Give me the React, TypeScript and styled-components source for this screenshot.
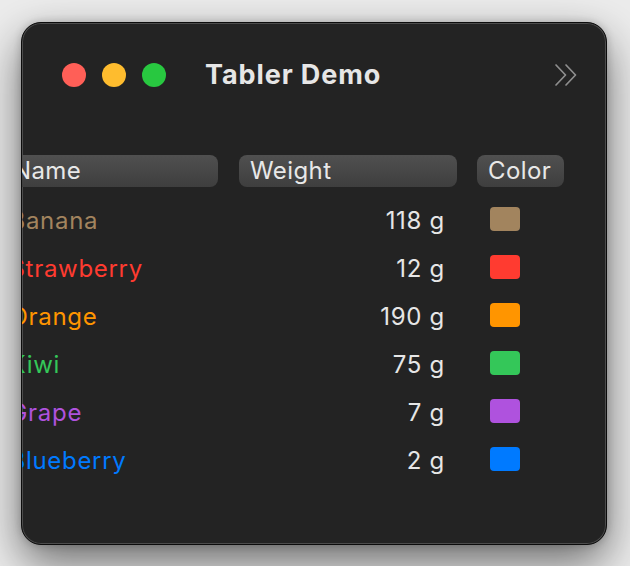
import React from "react";
import styled, { createGlobalStyle } from "styled-components";

const Global = createGlobalStyle`
  html, body { margin: 0; padding: 0; }
  body {
    background: #ececec;
    font-family: Inter, "Noto Sans", "Liberation Sans", sans-serif;
    -webkit-font-smoothing: antialiased;
  }
`;

const Page = styled.div`
  width: 630px;
  height: 566px;
  padding: 22px 0 0 21px;
  box-sizing: border-box;
  overflow: hidden;
`;

const Window = styled.div`
  width: 586px;
  height: 523px;
  box-sizing: border-box;
  background: #232323;
  border: 1px solid #0c0c0c;
  border-radius: 20px;
  box-shadow: inset 0 0 0 1px #4c4c4c, 0 18px 45px rgba(0, 0, 0, 0.55),
    0 0 8px rgba(0, 0, 0, 0.2);
  overflow: hidden;
  display: flex;
  flex-direction: column;
`;

const TitleBar = styled.div`
  height: 104px;
  flex: none;
  display: flex;
  align-items: center;
  padding: 0 27px 0 40px;
`;

const Lights = styled.div`
  display: flex;
  gap: 16px;
  margin-right: 39px;
`;

const Light = styled.span<{ $c: string }>`
  width: 24px;
  height: 24px;
  border-radius: 50%;
  background: ${(p) => p.$c};
`;

const Title = styled.div`
  flex: 1;
  color: #e6e6e6;
  font-size: 27px;
  font-weight: 700;
  letter-spacing: 0.9px;
  padding-bottom: 1px;
`;

const Chevrons = styled.svg`
  width: 26px;
  height: 24px;
  display: block;
`;

const Table = styled.div`
  margin: 28px 0 0 -20px;
  display: grid;
  grid-template-columns: 216px 218px 86px;
  column-gap: 21px;
  grid-auto-rows: 48px;
  grid-template-rows: 40px;
`;

const HeaderCell = styled.div`
  height: 32px;
  box-sizing: border-box;
  padding: 0 11px;
  border-radius: 8px;
  background: linear-gradient(#505050, #3e3e3e);
  color: #e8e8e8;
  font-size: 24px;
  letter-spacing: 0.4px;
  line-height: 32px;
  white-space: nowrap;
  align-self: start;
`;

const ColorHeaderCell = styled(HeaderCell)`
  margin-left: -1px;
`;

const NameCell = styled.div<{ $c: string }>`
  color: ${(p) => p.$c};
  font-size: 24px;
  letter-spacing: 0.7px;
  display: flex;
  align-items: center;
  padding-left: 7.5px;
  padding-top: 2px;
  white-space: nowrap;
`;

const WeightCell = styled.div`
  color: #e6e6e6;
  font-size: 24px;
  letter-spacing: 0.7px;
  display: flex;
  align-items: center;
  justify-content: flex-end;
  padding-right: 12px;
  padding-top: 2px;
  white-space: nowrap;
`;

const ColorCell = styled.div`
  display: flex;
  align-items: center;
  padding-left: 12px;
`;

const Swatch = styled.span<{ $c: string }>`
  width: 30px;
  height: 24px;
  border-radius: 4px;
  background: ${(p) => p.$c};
`;

const fruits = [
  { name: "Banana", weight: "118 g", color: "#a2845e" },
  { name: "Strawberry", weight: "12 g", color: "#ff3b30" },
  { name: "Orange", weight: "190 g", color: "#ff9500" },
  { name: "Kiwi", weight: "75 g", color: "#34c759" },
  { name: "Grape", weight: "7 g", color: "#af52de" },
  { name: "Blueberry", weight: "2 g", color: "#007aff" },
];

export default function App() {
  return (
    <>
      <Global />
      <Page>
        <Window>
          <TitleBar>
            <Lights>
              <Light $c="#ff5f57" />
              <Light $c="#febc2e" />
              <Light $c="#28c840" />
            </Lights>
            <Title>Tabler Demo</Title>
            <Chevrons viewBox="0 0 26 24" fill="none" stroke="#8e8e8e" strokeWidth="1.7" strokeLinecap="round" strokeLinejoin="round">
              <path d="M3 2 L12.5 12 L3 22" />
              <path d="M13 2 L22.5 12 L13 22" />
            </Chevrons>
          </TitleBar>
          <Table>
            <HeaderCell>Name</HeaderCell>
            <HeaderCell>Weight</HeaderCell>
            <ColorHeaderCell>Color</ColorHeaderCell>
            {fruits.map((f) => (
              <React.Fragment key={f.name}>
                <NameCell $c={f.color}>{f.name}</NameCell>
                <WeightCell>{f.weight}</WeightCell>
                <ColorCell>
                  <Swatch $c={f.color} />
                </ColorCell>
              </React.Fragment>
            ))}
          </Table>
        </Window>
      </Page>
    </>
  );
}
